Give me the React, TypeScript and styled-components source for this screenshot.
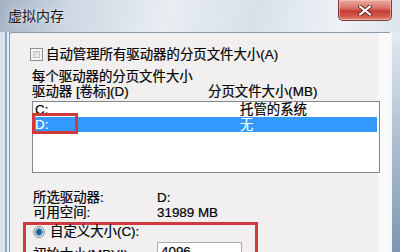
import React from 'react';
import styled, { createGlobalStyle } from 'styled-components';

const GlobalStyle = createGlobalStyle`
  html, body {
    margin: 0;
    padding: 0;
    background: #ffffff;
  }
  body {
    width: 400px;
    height: 252px;
    overflow: hidden;
  }
`;

const Window = styled.div`
  width: 400px;
  height: 252px;
  display: flex;
  flex-direction: column;
  overflow: hidden;
  background: linear-gradient(100deg, #a4b2c2 0%, #cdd8e3 16%, #e8edf2 38%, #d8e1ea 58%, #eef2f6 78%, #d0dbe6 100%);
  font-family: "Liberation Sans", "Noto Sans CJK SC", sans-serif;
  font-size: 13.4px;
  color: #000;
`;

const TitleBar = styled.div`
  height: 32px;
  flex: none;
  display: flex;
  justify-content: space-between;
  align-items: flex-start;
`;

const Title = styled.div`
  padding: 8px 0 0 8px;
  font-size: 14px;
  line-height: 16px;
  color: #1a1a1a;
  text-shadow: 0 0 6px rgba(255, 255, 255, 0.9);
`;

const CloseButton = styled.div`
  width: 54px;
  height: 21px;
  margin-right: 8px;
  box-sizing: border-box;
  border: 1px solid #7c3a36;
  border-top: none;
  border-radius: 0 0 5px 5px;
  background: linear-gradient(180deg, #e9aaa2 0%, #d77569 40%, #c23f32 55%, #d0574a 80%, #e18c7e 100%);
  box-shadow: inset 0 0 0 1px rgba(255, 210, 200, 0.5);
  display: flex;
  align-items: center;
  justify-content: center;
`;

const Body = styled.div`
  flex: 1;
  display: flex;
  min-height: 0;
`;

const LeftFrame = styled.div`
  width: 9px;
  flex: none;
  background: linear-gradient(90deg, #d9e3ed 0 5px, #8fa9c4 5px 7px, #e8eef4 7px);
`;

const RightFrame = styled.div`
  width: 10px;
  flex: none;
  background: linear-gradient(180deg, #e3eaf1 0%, #b7c6d6 40%, #7f97b1 100%);
  box-shadow: inset 2px 0 0 #f4f7fa;
`;

const Content = styled.div`
  flex: 1;
  overflow: hidden;
  border-top: 1px solid #8e9caa;
  border-left: 1px solid #8e9caa;
  border-top-left-radius: 3px;
  background: linear-gradient(90deg, #f1eff0 calc(100% - 12px), #f8f9fb calc(100% - 12px));
  padding-left: 13px;
  -webkit-text-stroke: 0.2px #000;
`;

const CheckRow = styled.div`
  margin: 14px 0 0 7px;
  height: 15px;
  display: flex;
  align-items: center;
  gap: 3px;
  line-height: 15px;
  white-space: nowrap;
`;

const CheckBox = styled.span`
  width: 13px;
  height: 13px;
  flex: none;
  box-sizing: border-box;
  border: 1px solid #8f8f8f;
  box-shadow: inset 0 0 0 2px #f4f4f4, inset 0 0 0 3px #c4c4c4;
  background-image: linear-gradient(135deg, #cfcfcf, #f7f7f7);
`;

const Line = styled.div<{ $indent: number; $top?: number }>`
  margin: ${(p) => p.$top ?? 0}px 0 0 ${(p) => p.$indent}px;
  height: 15px;
  line-height: 15px;
  display: flex;
  white-space: nowrap;
`;

const Cell = styled.span<{ $w: number }>`
  width: ${(p) => p.$w}px;
  flex: none;
`;

const ListBox = styled.div`
  position: relative;
  margin: 2px 0 0 9px;
  width: 348px;
  height: 72px;
  box-sizing: border-box;
  border: 1px solid #828790;
  background: #ffffff;
`;

const ListRow = styled.div<{ $selected?: boolean }>`
  height: 15px;
  line-height: 15px;
  margin-right: 2px;
  padding-left: 2px;
  display: flex;
  white-space: nowrap;
  background: ${(p) => (p.$selected ? '#3399ff' : 'transparent')};
  color: ${(p) => (p.$selected ? '#f4ffff' : '#000')};
  -webkit-text-stroke: 0.2px ${(p) => (p.$selected ? '#f4ffff' : '#000')};
`;

const RedMark = styled.div`
  position: absolute;
  left: -1px;
  top: 11px;
  width: 46px;
  height: 21px;
  box-sizing: border-box;
  border: 3px solid #cf3a3e;
`;

const RedBox = styled.div`
  margin-top: 2px;
  width: 235px;
  height: 60px;
  box-sizing: border-box;
  border: 3px solid #cf3a3e;
  border-bottom: none;
  padding-left: 7px;
`;

const RadioRow = styled.div`
  height: 13px;
  display: flex;
  align-items: center;
  gap: 5px;
  line-height: 13px;
  white-space: nowrap;
`;

const Radio = styled.span`
  width: 12px;
  height: 12px;
  flex: none;
  box-sizing: border-box;
  border-radius: 50%;
  border: 1px solid #8a8a8a;
  background: radial-gradient(circle, #1d5c8a 0 2px, #3f88b8 2.5px 3.5px, #e8eef2 4px);
`;

const InitRow = styled.div`
  margin-top: 4px;
  display: flex;
  align-items: flex-start;
  line-height: 15px;
  white-space: nowrap;
`;

const InitLabel = styled.span`
  width: 124px;
  flex: none;
  padding-top: 5px;
`;

const Input = styled.div`
  width: 85px;
  height: 20px;
  box-sizing: border-box;
  border: 1px solid #abadb3;
  background: #ffffff;
  padding-left: 3px;
  line-height: 18px;
`;

export default function App() {
  return (
    <>
      <GlobalStyle />
      <Window>
        <TitleBar>
          <Title>虚拟内存</Title>
          <CloseButton>
            <svg width="14" height="11" viewBox="0 0 14 11">
              <path d="M2 1.5 L12 9.5 M12 1.5 L2 9.5" stroke="#6b2a24" strokeWidth="4" strokeLinecap="round" />
              <path d="M2 1.5 L12 9.5 M12 1.5 L2 9.5" stroke="#ffffff" strokeWidth="2.2" strokeLinecap="round" />
            </svg>
          </CloseButton>
        </TitleBar>
        <Body>
          <LeftFrame />
          <Content>
            <CheckRow>
              <CheckBox />
              <span>自动管理所有驱动器的分页文件大小(A)</span>
            </CheckRow>
            <Line $indent={9} $top={7}>每个驱动器的分页文件大小</Line>
            <Line $indent={9}>
              <Cell $w={176}>驱动器 [卷标](D)</Cell>
              <span>分页文件大小(MB)</span>
            </Line>
            <ListBox>
              <ListRow>
                <Cell $w={205}>C:</Cell>
                <span>托管的系统</span>
              </ListRow>
              <ListRow $selected>
                <Cell $w={205}>D:</Cell>
                <span>无</span>
              </ListRow>
              <RedMark />
            </ListBox>
            <Line $indent={10} $top={17}>
              <Cell $w={124}>所选驱动器:</Cell>
              <span>D:</span>
            </Line>
            <Line $indent={10}>
              <Cell $w={124}>可用空间:</Cell>
              <span>31989 MB</span>
            </Line>
            <RedBox>
              <RadioRow>
                <Radio />
                <span>自定义大小(C):</span>
              </RadioRow>
              <InitRow>
                <InitLabel>初始大小(MB)(I):</InitLabel>
                <Input>4096</Input>
              </InitRow>
            </RedBox>
          </Content>
          <RightFrame />
        </Body>
      </Window>
    </>
  );
}
